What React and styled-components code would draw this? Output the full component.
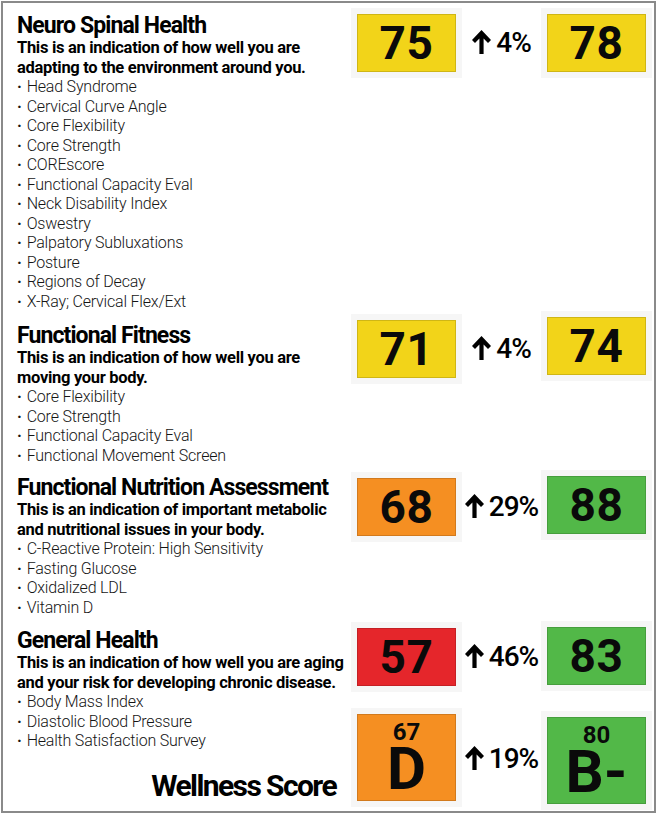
import React from "react";
import styled, { createGlobalStyle } from "styled-components";

const Global = createGlobalStyle`
  html, body { margin: 0; padding: 0; background: #fff; }
  body { font-family: Roboto, "Open Sans", sans-serif; color: #111; }
`;

const Frame = styled.div`
  box-sizing: border-box;
  margin: 1px 0 0 1px;
  width: 655px;
  height: 812px;
  border: 2px solid #8a8a8a;
  padding: 11px 0 0 14px;
  display: flex;
  flex-direction: column;
`;

const Section = styled.section`
  display: flex;
  align-items: flex-start;
  margin-top: ${(p) => p.$gap || 0}px;
`;

const TextCol = styled.div`
  flex: 0 0 340px;
  display: flex;
  flex-direction: column;
`;

const Title = styled.h2`
  margin: 0;
  font-size: 23px;
  line-height: 24px;
  font-weight: 700;
  letter-spacing: -0.9px;
  color: #000;
  white-space: nowrap;
`;

const Desc = styled.p`
  margin: 0;
  font-size: 16.5px;
  line-height: 19.5px;
  font-weight: 700;
  letter-spacing: -0.3px;
  color: #000;
  white-space: nowrap;
`;

const List = styled.ul`
  margin: 0;
  padding: 0;
  list-style: none;
`;

const Item = styled.li`
  font-size: 16px;
  line-height: 19.5px;
  font-weight: 300;
  color: #151515;
  letter-spacing: -0.2px;
  white-space: nowrap;
  &::before {
    content: "·";
    font-weight: 700;
    margin-right: 5px;
  }
`;

const Wellness = styled.div`
  margin-top: 18.5px;
  text-align: right;
  font-size: 30px;
  line-height: 34px;
  font-weight: 700;
  letter-spacing: -1.6px;
  color: #000;
  padding-right: 21px;
`;

const ScoreCol = styled.div`
  display: flex;
  flex-direction: column;
  gap: 28px;
  margin-top: ${(p) => p.$top || 0}px;
`;

const ScoreRow = styled.div`
  display: flex;
  align-items: flex-start;
  width: 290px;
`;

const Box = styled.div`
  box-sizing: border-box;
  flex: 0 0 99px;
  height: ${(p) => (p.$tall ? 87 : 58)}px;
  background: ${(p) => p.$bg};
  border: 1px solid rgba(0, 0, 0, 0.14);
  box-shadow: 0 0 0 6px #f6f6f6;
  display: flex;
  flex-direction: column;
  align-items: center;
  justify-content: ${(p) => (p.$tall ? "flex-start" : "center")};
  padding-top: ${(p) => (p.$tall ? 5 : 0)}px;
  color: #0a0a0a;
  font-weight: 700;
  margin-top: ${(p) => p.$shift || 0}px;
`;

const Num = styled.span`
  font-size: 46px;
  line-height: 46px;
  letter-spacing: 0.5px;
`;

const SmallNum = styled.span`
  display: block;
  font-size: 24px;
  line-height: 24px;
  height: 20px;
  overflow: visible;
`;

const Grade = styled.span`
  display: block;
  font-size: 60px;
  line-height: 50px;
  margin-top: 4px;
`;

const Change = styled.div`
  flex: 0 0 91px;
  align-self: center;
  display: flex;
  align-items: flex-end;
  justify-content: center;
  gap: 5px;
  font-size: 28px;
  line-height: 28px;
  font-weight: 500;
  letter-spacing: -1px;
  color: #000;
  svg { margin-bottom: 3px; }
`;

const Arrow = () => (
  <svg width="19" height="24" viewBox="0 0 19 24" aria-hidden="true">
    <path d="M9.5 0 L19 10 L16 13 L11.6 8.4 L11.6 24 L7.4 24 L7.4 8.4 L3 13 L0 10 Z" fill="#000" />
  </svg>
);

const COLORS = {
  yellow: "#f2d419",
  orange: "#f58f22",
  green: "#52b848",
  red: "#e5262b",
};

const sections = [
  {
    title: "Neuro Spinal Health",
    desc: ["This is an indication of how well you are", "adapting to the environment around you."],
    items: [
      "Head Syndrome",
      "Cervical Curve Angle",
      "Core Flexibility",
      "Core Strength",
      "COREscore",
      "Functional Capacity Eval",
      "Neck Disability Index",
      "Oswestry",
      "Palpatory Subluxations",
      "Posture",
      "Regions of Decay",
      "X-Ray; Cervical Flex/Ext",
    ],
    from: { v: "75", c: "yellow" },
    to: { v: "78", c: "yellow" },
    change: "4%",
    gap: 0,
    top: 0,
  },
  {
    title: "Functional Fitness",
    desc: ["This is an indication of how well you are", "moving your body."],
    items: ["Core Flexibility", "Core Strength", "Functional Capacity Eval", "Functional Movement Screen"],
    from: { v: "71", c: "yellow" },
    to: { v: "74", c: "yellow", shift: -3 },
    change: "4%",
    gap: 13,
    top: -4,
  },
  {
    title: "Functional Nutrition Assessment",
    desc: ["This is an indication of important metabolic", "and nutritional issues in your body."],
    items: ["C-Reactive Protein: High Sensitivity", "Fasting Glucose", "Oxidalized LDL", "Vitamin D"],
    from: { v: "68", c: "orange" },
    to: { v: "88", c: "green", shift: -2 },
    change: "29%",
    gap: 11,
    top: 2,
  },
];

function ScorePair({ from, to, change }) {
  return (
    <ScoreRow>
      <Box $bg={COLORS[from.c]} $shift={from.shift}>
        <Num>{from.v}</Num>
      </Box>
      <Change>
        <Arrow />
        <span>{change}</span>
      </Change>
      <Box $bg={COLORS[to.c]} $shift={to.shift}>
        <Num>{to.v}</Num>
      </Box>
    </ScoreRow>
  );
}

export default function App() {
  return (
    <>
      <Global />
      <Frame>
        {sections.map((s) => (
          <Section key={s.title} $gap={s.gap}>
            <TextCol>
              <Title>{s.title}</Title>
              {s.desc.map((d) => (
                <Desc key={d}>{d}</Desc>
              ))}
              <List>
                {s.items.map((i) => (
                  <Item key={i}>{i}</Item>
                ))}
              </List>
            </TextCol>
            <ScoreCol $top={s.top}>
              <ScorePair from={s.from} to={s.to} change={s.change} />
            </ScoreCol>
          </Section>
        ))}
        <Section $gap={12}>
          <TextCol>
            <Title>General Health</Title>
            <Desc>This is an indication of how well you are aging</Desc>
            <Desc>and your risk for developing chronic disease.</Desc>
            <List>
              <Item>Body Mass Index</Item>
              <Item>Diastolic Blood Pressure</Item>
              <Item>Health Satisfaction Survey</Item>
            </List>
            <Wellness>Wellness Score</Wellness>
          </TextCol>
          <ScoreCol $top={-1}>
            <ScorePair from={{ v: "57", c: "red" }} to={{ v: "83", c: "green", shift: -1 }} change="46%" />
            <ScoreRow>
              <Box $tall $bg={COLORS.orange}>
                <SmallNum>67</SmallNum>
                <Grade>D</Grade>
              </Box>
              <Change>
                <Arrow />
                <span>19%</span>
              </Change>
              <Box $tall $bg={COLORS.green} $shift={3}>
                <SmallNum>80</SmallNum>
                <Grade>B-</Grade>
              </Box>
            </ScoreRow>
          </ScoreCol>
        </Section>
      </Frame>
    </>
  );
}
